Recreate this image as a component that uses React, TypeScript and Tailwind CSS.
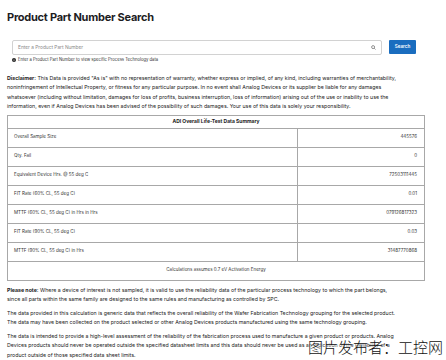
import React from "react";

const rows: [string, string][] = [
  ["Overall Sample Size", "445576"],
  ["Qty. Fail", "0"],
  ["Equivalent Device Hrs. @ 55 deg C", "72503111445"],
  ["FIT Rate (60% CL, 55 deg C)", "0.01"],
  ["MTTF (60% CL, 55 deg C) in Hrs in Hrs", "079126817323"],
  ["FIT Rate (90% CL, 55 deg C)", "0.03"],
  ["MTTF (90% CL, 55 deg C) in Hrs", "31487770868"],
];

export default function App() {
  return (
    <div
      className="relative w-[446px] h-[360px] overflow-hidden bg-white text-[#222]"
      style={{ fontFamily: "Inter, 'Liberation Sans', sans-serif" }}
    >
      <div className="px-[7px] pt-[10px]">
        <h1 className="text-[11px] leading-[14px] font-bold tracking-[-0.25px] text-[#1d1d1f]">
          Product Part Number Search
        </h1>

        <div className="mt-[16px] pl-[5px] flex items-start gap-[7px]">
          <div>
            <div className="w-[370px] h-[15px] border border-[#d2d2d2] rounded-[2px] flex items-center justify-between pl-[5px] pr-[5px]">
              <span className="text-[4.8px] leading-[5px] text-[#8a8a8a]">Enter a Product Part Number</span>
              <svg width="5" height="5" viewBox="0 0 10 10" fill="none" stroke="#777" strokeWidth="1.6">
                <circle cx="4.2" cy="4.2" r="3" />
                <path d="M6.4 6.4 L9 9" />
              </svg>
            </div>
            <div className="mt-[2px] flex items-center gap-[2px] text-[4.2px] leading-[5px] text-[#333]">
              <svg width="4" height="4" viewBox="0 0 10 10">
                <circle cx="5" cy="5" r="5" fill="#222" />
                <rect x="4.3" y="4.2" width="1.4" height="3.6" fill="#fff" />
                <rect x="4.3" y="2.2" width="1.4" height="1.3" fill="#fff" />
              </svg>
              <span>Enter a Product Part Number to view specific Process Technology data</span>
            </div>
          </div>
          <button className="w-[27px] h-[14px] rounded-[1px] bg-[#1a6dbf] text-white text-[4.6px] font-semibold flex items-center justify-center">
            Search
          </button>
        </div>

        <p className="mt-[12px] text-[5.25px] leading-[9.4px] whitespace-nowrap text-[#222]">
          <b>Disclaimer:</b> This Data is provided "As is" with no representation of warranty, whether express or implied, of any kind, including warranties of merchantability,
          <br />
          noninfringement of Intellectual Property, or fitness for any particular purpose. In no event shall Analog Devices or its supplier be liable for any damages
          <br />
          whatsoever (including without limitation, damages for loss of profits, business interruption, loss of information) arising out of the use or inability to use the
          <br />
          information, even if Analog Devices has been advised of the possibility of such damages. Your use of this data is solely your responsibility.
        </p>

        <table className="mt-[3px] w-[418px] border-collapse border border-[#a8a8a8] text-[4.5px] text-[#333]">
          <tbody>
            <tr className="h-[13px]">
              <td colSpan={2} className="border border-[#a8a8a8] text-center font-bold text-[5px] text-[#222]">
                ADI Overall Life-Test Data Summary
              </td>
            </tr>
            {rows.map(([k, v]) => (
              <tr key={k} className="h-[19px]">
                <td className="w-[290px] border border-[#a8a8a8] pl-[6px]">{k}</td>
                <td className="border border-[#a8a8a8] border-l-[#888] text-right pr-[7px]">{v}</td>
              </tr>
            ))}
            <tr className="h-[19px]">
              <td colSpan={2} className="border border-[#a8a8a8] text-center">
                Calculations assumes 0.7 eV Activation Energy
              </td>
            </tr>
          </tbody>
        </table>

        <div className="mt-[5px] flex flex-col gap-[4.6px] text-[5.25px] leading-[9.3px] whitespace-nowrap text-[#222]">
          <p>
            <b>Please note:</b> Where a device of interest is not sampled, it is valid to use the reliability data of the particular process technology to which the part belongs,
            <br />
            since all parts within the same family are designed to the same rules and manufacturing as controlled by SPC.
          </p>
          <p>
            The data provided in this calculation is generic data that reflects the overall reliability of the Wafer Fabrication Technology grouping for the selected product.
            <br />
            The data may have been collected on the product selected or other Analog Devices products manufactured using the same technology grouping.
          </p>
          <p>
            The data is intended to provide a high-level assessment of the reliability of the fabrication process used to manufacture a given product or products. Analog
            <br />
            Devices products should never be operated outside the specified datasheet limits and this data should never be used as an indication of the Reliability of a
            <br />
            product outside of those specified data sheet limits.
          </p>
        </div>
      </div>

      <div
        className="absolute right-[3px] bottom-[5px] text-[15px] leading-[16px] font-light text-[#111]"
        style={{ fontFamily: "'Noto Sans CJK SC', sans-serif", textShadow: "0 0 2px #fff, 0 0 2px #fff" }}
      >
        图片发布者：工控网
      </div>
    </div>
  );
}
